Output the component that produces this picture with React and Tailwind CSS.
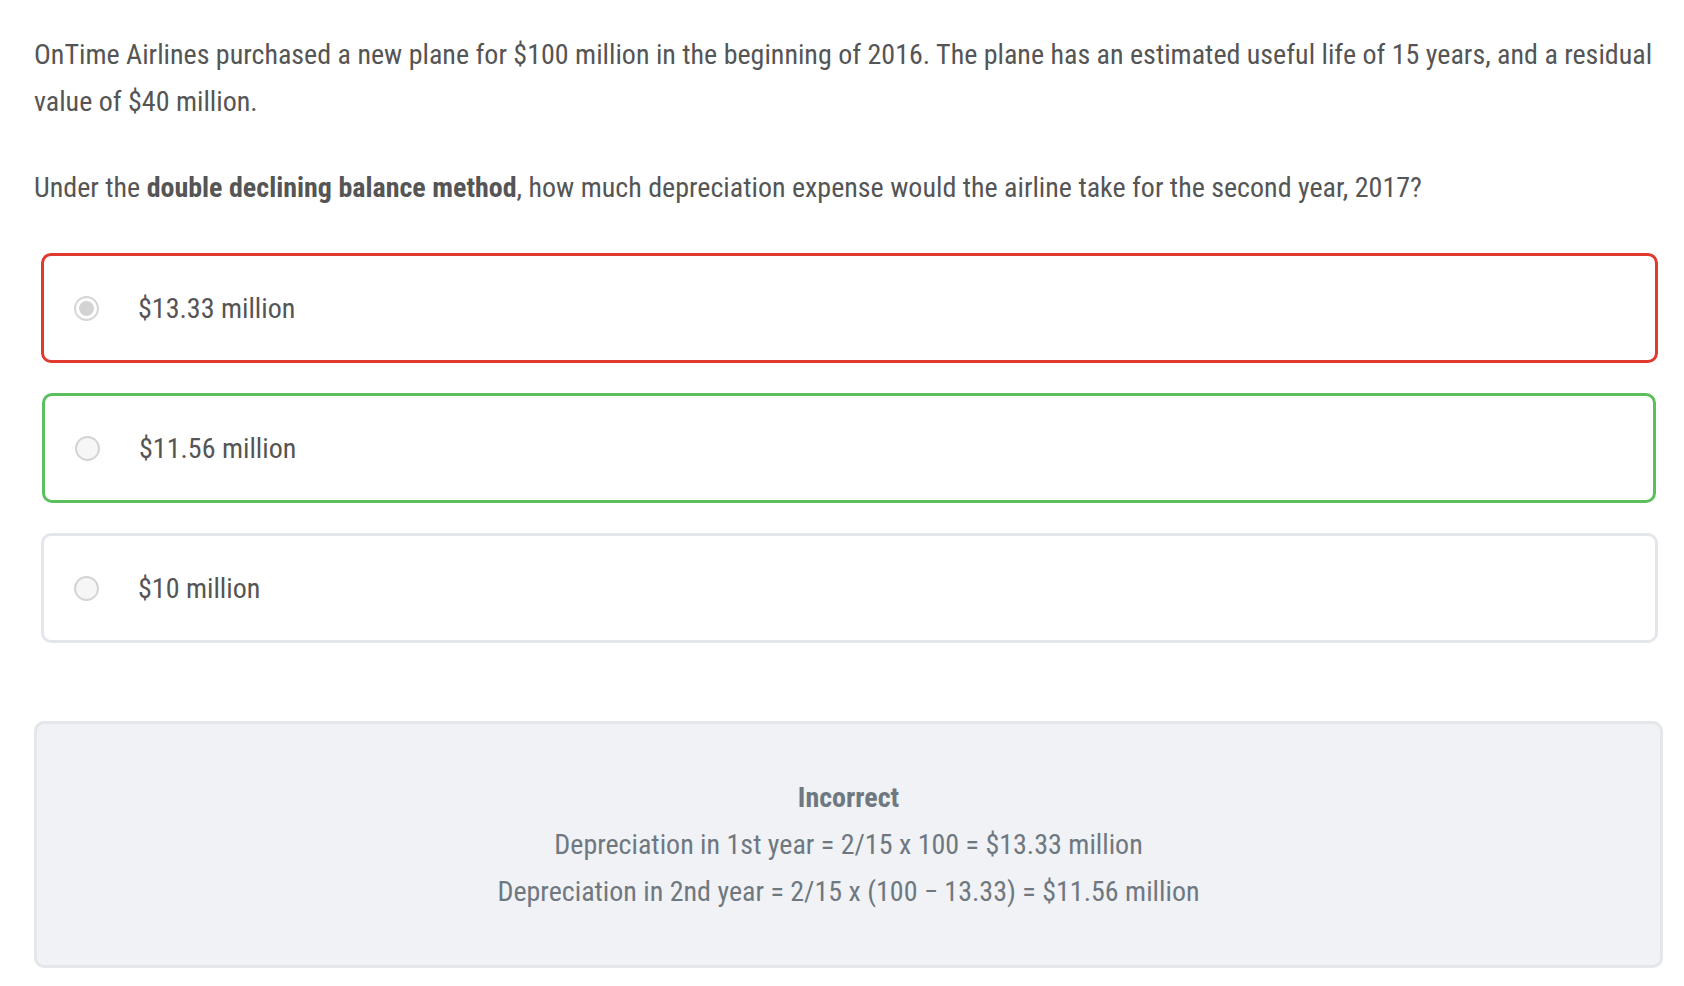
const options = [
  { label: '$13.33 million', state: 'wrong' },
  { label: '$11.56 million', state: 'right' },
  { label: '$10 million', state: 'none' },
]

function Radio({ checked }) {
  if (checked) {
    return (
      <span className="flex h-[25px] w-[25px] shrink-0 items-center justify-center rounded-full border-2 border-[#d6d6d6] bg-white">
        <span className="h-[15px] w-[15px] rounded-full bg-[#d3d3d3]" />
      </span>
    )
  }
  return <span className="h-[25px] w-[25px] shrink-0 rounded-full border-2 border-[#d4d4d4] bg-[#f6f6f6]" />
}

function Option({ label, state }) {
  const border =
    state === 'wrong'
      ? 'border-[#e0392e] ml-[7px] mr-[5px]'
      : state === 'right'
        ? 'border-[#5bbf5c] ml-[8px] mr-[7px] pl-[2px]'
        : 'border-[#e3e6ea] ml-[7px] mr-[5px]'
  return (
    <div className={`flex h-[110px] items-center rounded-[10px] border-[3px] pl-[30px] ${border}`}>
      <Radio checked={state === 'wrong'} />
      <span className="ml-[39px] text-[28px] text-[#555]">{label}</span>
    </div>
  )
}

export default function App() {
  return (
    <div
      className="min-h-screen bg-white pl-[34px] pr-[21px] pt-[31px] pb-[18px] text-[28px] leading-[47px] text-[#555]"
      style={{ fontFamily: '"Roboto Condensed", Roboto, "Liberation Sans Narrow", sans-serif' }}
    >
      <p>
        OnTime Airlines purchased a new plane for $100 million in the beginning of 2016. The plane has an estimated
        useful life of 15 years, and a residual value of $40 million.
      </p>
      <p className="mt-[39px]">
        Under the <strong className="font-bold">double declining balance method</strong>, how much depreciation
        expense would the airline take for the second year, 2017?
      </p>

      <div className="mt-[42px] flex flex-col gap-[30px]">
        {options.map((o) => (
          <Option key={o.label} {...o} />
        ))}
      </div>

      <div className="mt-[78px] rounded-[10px] border-[3px] border-[#e3e6ea] bg-[#f0f2f5] pt-[50px] pb-[50px] text-center text-[#6f7880]">
        <p className="font-bold">Incorrect</p>
        <p>Depreciation in 1st year = 2/15 x 100 = $13.33 million</p>
        <p>Depreciation in 2nd year = 2/15 x (100 − 13.33) = $11.56 million</p>
      </div>
    </div>
  )
}
